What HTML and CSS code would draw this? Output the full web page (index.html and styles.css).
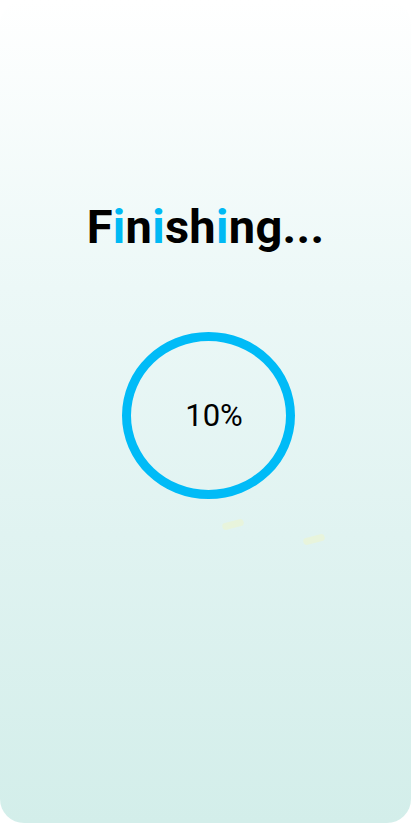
FILE: index.html
```html
<!DOCTYPE html>
<html>
<head>
<meta charset="utf-8">
<link rel="stylesheet" href="styles.css">
</head>
<body>
<div class="screen">
  <h1 class="title">F<span class="hl">i</span>n<span class="hl">i</span>sh<span class="hl">i</span>ng...</h1>
  <div class="ring-wrap">
    <div class="ring"><span class="pct">10%</span></div>
    <span class="smudge s1"></span>
    <span class="smudge s2"></span>
  </div>
</div>
</body>
</html>
```
FILE: styles.css
```css
html, body { margin: 0; padding: 0; background: #ffffff; }
.screen {
  width: 411px;
  height: 823px;
  border-radius: 24px;
  background: linear-gradient(to bottom, #ffffff 0%, #ecf8f7 35%, #e0f3f1 65%, #d3eeea 100%);
  display: flex;
  flex-direction: column;
  align-items: center;
  font-family: Roboto, "Noto Sans", sans-serif;
  overflow: hidden;
}
.title {
  margin: 199px 0 0 0;
  font-size: 47px;
  font-weight: 700;
  line-height: 56px;
  color: #000;
  letter-spacing: 0.3px;
  margin-left: 0;
}
.hl { color: #00b9f4; }
.ring-wrap {
  position: relative;
  margin-top: 77px;
  margin-left: 5px;
}
.ring {
  box-sizing: border-box;
  width: 173px;
  height: 167px;
  border: 9px solid #00bbf7;
  border-radius: 50%;
  display: flex;
  align-items: center;
  justify-content: center;
}
.pct {
  font-size: 31px;
  font-weight: 400;
  color: #000;
  margin-left: 12px;
}
.smudge {
  position: absolute;
  width: 22px;
  height: 7px;
  border-radius: 4px;
  background: #e8f4dc;
  transform: rotate(-15deg);
}
.s1 { left: 100px; top: 189px; }
.s2 { left: 181px; top: 204px; }
```
